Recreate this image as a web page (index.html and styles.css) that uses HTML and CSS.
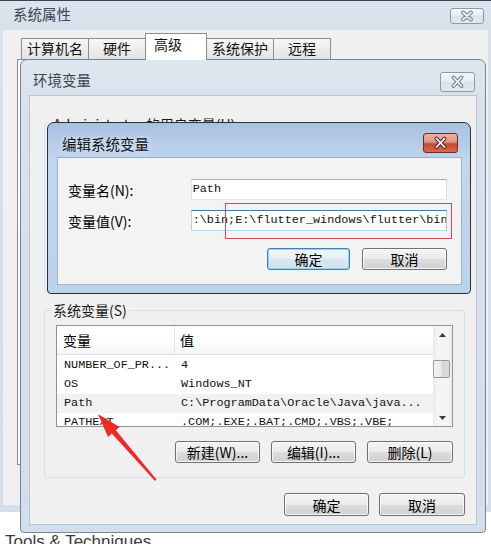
FILE: index.html
```html
<!DOCTYPE html>
<html lang="zh-CN">
<head>
  <meta charset="UTF-8" />
  <title>编辑系统变量</title>
  <link rel="stylesheet" href="styles.css">
</head>
<body>
<div class="desk">
  <div class="window sysWin">
    <div class="titleBar">
      <span class="winTitle">系统属性</span>
      <span class="closeBtn small">
        <svg viewBox="0 0 32 14"><path class="xOut" d="M12 3.5 20 10.5 M20 3.5 12 10.5" /><path class="xIn" d="M12 3.5 20 10.5 M20 3.5 12 10.5" /></svg>
      </span>
    </div>
    <div class="winBody">
      <div class="tabs">
        <span class="tab">计算机名</span>
        <span class="tab">硬件</span>
        <span class="tab active">高级</span>
        <span class="tab">系统保护</span>
        <span class="tab">远程</span>
      </div>
      <div class="tabPanel"></div>
    </div>
  </div>
  <p class="pageText">Tools &amp; Techniques</p>

  <div class="window envWin">
    <div class="titleBar">
      <span class="winTitle">环境变量</span>
      <span class="closeBtn">
        <svg viewBox="0 0 33 18"><path class="xOut" d="M12.5 4.5 20.5 13 M20.5 4.5 12.5 13" /><path class="xIn" d="M12.5 4.5 20.5 13 M20.5 4.5 12.5 13" /></svg>
      </span>
    </div>
    <div class="client">
      <fieldset class="group userGroup">
        <legend>Administrator 的用户变量(U)</legend>
      </fieldset>
      <fieldset class="group">
        <legend>系统变量(S)</legend>
        <div class="listView">
          <div class="listMain">
            <div class="listHead">
              <span class="colName">变量</span>
              <span class="colValue">值</span>
            </div>
            <div class="listRows">
              <div class="listRow"><span class="colName">NUMBER_OF_PR...</span><span class="colValue">4</span></div>
              <div class="listRow"><span class="colName">OS</span><span class="colValue">Windows_NT</span></div>
              <div class="listRow hot"><span class="colName">Path</span><span class="colValue">C:\ProgramData\Oracle\Java\java...</span></div>
              <div class="listRow"><span class="colName">PATHEXT</span><span class="colValue">.COM;.EXE;.BAT;.CMD;.VBS;.VBE;</span></div>
            </div>
          </div>
          <div class="vScroll">
            <span class="scrollArrow"><svg viewBox="0 0 7 4"><polygon points="0,4 3.5,0 7,4" /></svg></span>
            <div class="scrollTrack"><span class="scrollThumb"></span></div>
            <span class="scrollArrow"><svg viewBox="0 0 7 4"><polygon points="0,0 7,0 3.5,4" /></svg></span>
          </div>
        </div>
        <div class="btnRow groupBtns">
          <button class="btn">新建(W)...</button>
          <button class="btn">编辑(I)...</button>
          <button class="btn wide">删除(L)</button>
        </div>
      </fieldset>
      <div class="btnRow dialogBtns">
        <button class="btn">确定</button>
        <button class="btn wide">取消</button>
      </div>
    </div>
  </div>

  <div class="window editWin">
    <div class="titleBar">
      <span class="winTitle">编辑系统变量</span>
      <span class="closeBtn red">
        <svg viewBox="0 0 33 18"><path class="xOut" d="M12.5 4.5 20.5 13 M20.5 4.5 12.5 13" /><path class="xIn" d="M12.5 4.5 20.5 13 M20.5 4.5 12.5 13" /></svg>
      </span>
    </div>
    <div class="client editClient">
      <div class="fieldRow">
        <span class="fieldLabel">变量名(N):</span>
        <div class="textBox">Path</div>
      </div>
      <div class="fieldRow">
        <span class="fieldLabel">变量值(V):</span>
        <div class="textBox focused">:\bin;E:\flutter_windows\flutter\bin</div>
      </div>
      <div class="btnRow editBtns">
        <button class="btn default">确定</button>
        <button class="btn wide">取消</button>
      </div>
    </div>
  </div>

  <div class="markBox"></div>
  <svg class="markArrow" viewBox="0 0 491 544">
    <polygon points="98,414 119.5,427 115.8,430.2 156.5,479.5 155,481 111.8,433.6 108,437" />
  </svg>
</div>
</body>
</html>
```

FILE: styles.css
```css
* { margin: 0; padding: 0; box-sizing: border-box; }
html, body {
  background: #fff;
  font-family: "Noto Sans CJK SC", "Noto Sans", sans-serif;
  font-size: 14px;
  color: #000;
}
.desk {
  position: relative;
  width: 491px;
  height: 544px;
  overflow: hidden;
}

/* windows */
.window {
  display: flex;
  flex-direction: column;
}
.titleBar {
  display: flex;
  align-items: flex-start;
  justify-content: space-between;
  flex-shrink: 0;
}
.winTitle {
  font-size: 14.5px;
  line-height: 20px;
  color: #3c4450;
}
.closeBtn {
  display: flex;
  width: 35px;
  height: 20px;
  border: 1px solid #8d99a7;
  border-radius: 3px;
  background: linear-gradient(#f4f7fa, #e6ecf2 50%, #d9e1e9 50%, #e2e8ee);
}
.closeBtn svg { width: 100%; height: 100%; }
.xOut, .xIn { fill: none; stroke-linecap: round; }
.xOut { stroke: #717e8d; stroke-width: 3.8; }
.xIn { stroke: #f1f4f7; stroke-width: 1.8; }
.closeBtn.red {
  border-color: #70291f;
  background: linear-gradient(#ebb3a5, #df9282 45%, #c94a31 55%, #d4694c);
}
.red .xOut { stroke: #5a211a; }
.red .xIn { stroke: #fff; }

/* 系统属性 */
.sysWin {
  width: 491px;
  height: 512px;
  padding: 0 3px 7px;
  border-top: 1px solid #3d4249;
  background: linear-gradient(#dbe4ee, #d6e1ec 30px, #d4dfeb);
}
.sysWin .titleBar { height: 29px; padding: 0 4px 0 10px; }
.sysWin .winTitle { margin-top: 3px; }
.closeBtn.small { width: 34px; height: 16px; margin-top: 7px; }
.winBody {
  flex: 1;
  display: flex;
  flex-direction: column;
  padding: 3px 14px 40px;
  background: #f0f0f0;
}
.tabs {
  display: flex;
  align-items: flex-end;
  height: 26px;
  padding-left: 4px;
}
.tab {
  position: relative;
  height: 21px;
  min-width: 58px;
  padding: 0 5px;
  margin-left: -1px;
  border: 1px solid #898c95;
  border-bottom: 0;
  background: linear-gradient(#f8f8f8, #ececec 50%, #e3e3e3);
  text-align: center;
  line-height: 19px;
  color: #111;
}
.tab:first-child { margin-left: 0; }
.tab.active {
  z-index: 1;
  height: 27px;
  min-width: 62px;
  margin-bottom: -1px;
  padding: 1px 0 0 8px;
  background: #fff;
  text-align: left;
}
.tabPanel {
  flex: 1;
  border: 1px solid #898c95;
  background: #fbfbfb;
}
.pageText {
  margin-top: 20px;
  padding-left: 5px;
  font-family: "Liberation Sans", Arial, sans-serif;
  font-size: 17px;
  line-height: 20px;
  color: #3a3a3a;
}

/* 环境变量 */
.envWin {
  position: absolute;
  left: 20px;
  top: 59px;
  width: 466px;
  height: 474px;
  padding: 0 8px 7px;
  border: 1px solid #788493;
  border-radius: 7px 7px 4px 4px;
  background: linear-gradient(#dfe7f0, #d7e2ed 40px, #d2deeb);
}
.envWin .titleBar { height: 35px; padding: 0 2px 0 4px; }
.envWin .winTitle { margin-top: 10px; }
.envWin .closeBtn { margin-top: 12px; }
.client {
  flex: 1;
  display: flex;
  flex-direction: column;
  padding: 0 11px 0 14px;
  border: 1px solid #b8c5d3;
  background: #f0f0f0;
}
.group {
  min-width: 0;
  padding: 7px 11px 14px;
  border: 1px solid #d5dfe5;
  border-radius: 3px;
}
.group legend {
  margin-left: -5px;
  padding: 0 2px;
  line-height: 16px;
  color: #1a1a1a;
}
.userGroup {
  height: 176px;
  margin: 20px 0 10px;
}
.listView {
  display: flex;
  height: 102px;
  border: 1px solid #8e939b;
  background: #fff;
}
.listMain {
  flex: 1;
  overflow: hidden;
}
.listHead {
  display: flex;
  height: 29px;
  border-bottom: 1px solid #dcdfe3;
  background: linear-gradient(#fff, #fff 55%, #f4f5f7);
  line-height: 28px;
}
.listHead .colName { border-right: 1px solid #e3e5e8; }
.colName {
  flex-shrink: 0;
  width: 118px;
  padding-left: 6px;
}
.colValue {
  padding-left: 5px;
  white-space: nowrap;
}
.listRows { margin-top: 1px; }
.listRow {
  display: flex;
  height: 19px;
  font-family: "Liberation Mono", "Noto Sans CJK SC", monospace;
  font-size: 11.8px;
  line-height: 19px;
  color: #111;
}
.listRow .colName { padding-left: 7px; }
.listRow .colValue { padding-left: 6px; }
.listRow.hot { background: #f1f1f1; }
.vScroll {
  display: flex;
  flex-direction: column;
  width: 19px;
  background: linear-gradient(90deg, #e9e9e9, #f5f5f5 25%, #f5f5f5 75%, #ececec);
}
.scrollArrow {
  display: flex;
  align-items: center;
  justify-content: center;
  height: 17px;
}
.scrollArrow svg { width: 7px; height: 4px; fill: #3a3a3a; }
.scrollTrack {
  flex: 1;
  padding-top: 17px;
}
.scrollThumb {
  display: block;
  width: 17px;
  height: 18px;
  border: 1px solid #979797;
  border-radius: 2px;
  background: linear-gradient(90deg, #f4f4f4, #e8e8e8 50%, #d6d6d6 50%, #dcdcdc);
}

/* buttons */
.btnRow {
  display: flex;
  justify-content: flex-end;
}
.btn {
  width: 85px;
  height: 22px;
  border: 1px solid #707070;
  border-radius: 3px;
  background: linear-gradient(#f3f3f3, #ebebeb 50%, #dddddd 50%, #d1d1d1);
  box-shadow: inset 0 0 0 1px rgba(255, 255, 255, 0.75);
  font-family: inherit;
  font-size: 14px;
  line-height: 20px;
  color: #000;
}
.btn.wide { width: 86px; }
.groupBtns { gap: 11px; margin-top: 14px; }
.dialogBtns { gap: 10px; margin-top: 15px; }
.dialogBtns .btn { height: 23px; }
.btn.default {
  border-color: #3c7fb1;
  box-shadow: inset 0 0 0 1px #8fd6f3;
  background: linear-gradient(#f1f6f9, #e7eff5 50%, #d9e6ef 50%, #d2e1eb);
}

/* 编辑系统变量 */
.editWin {
  position: absolute;
  left: 47px;
  top: 122px;
  width: 424px;
  height: 172px;
  padding: 0 8px 8px 9px;
  border: 1px solid #2b3036;
  border-radius: 7px 7px 4px 4px;
  background: linear-gradient(#a9c2e0, #b6cde8 22px, #c2d6ed 38px, #bcd2ea);
}
.editWin .titleBar { height: 34px; padding: 0 4px 0 5px; }
.editWin .winTitle {
  margin-top: 11px;
  color: #111;
  text-shadow: 0 0 6px rgba(255, 255, 255, 0.9);
}
.editWin .closeBtn { margin-top: 10px; }
.editClient {
  padding: 21px 14px 0 10px;
  border-color: #9fb3c8;
  background: #f3f3f3;
}
.fieldRow {
  display: flex;
  align-items: center;
  height: 21px;
  margin-bottom: 10px;
}
.fieldLabel {
  width: 123px;
  line-height: 20px;
}
.textBox {
  width: 257px;
  height: 21px;
  padding-left: 1px;
  overflow: hidden;
  border: 1px solid;
  border-color: #abadb3 #dbdfe6 #e3e9ef #e2e3ea;
  background: #fff;
  font-family: "Liberation Mono", monospace;
  font-size: 11.8px;
  line-height: 19px;
  white-space: nowrap;
  color: #111;
}
.textBox.focused { border-color: #3d7bad #a4c9e3 #b7d9ed #b5cfe7; }
.editBtns { gap: 12px; margin-top: 7px; }
.editBtns .btn { width: 83px; }
.editBtns .btn.wide { width: 85px; }

/* annotations */
.markBox {
  position: absolute;
  left: 225px;
  top: 203px;
  width: 227px;
  height: 36px;
  border: 1px solid #e0474c;
}
.markArrow {
  position: absolute;
  left: 0;
  top: 0;
  width: 491px;
  height: 544px;
  fill: #ee2a27;
  pointer-events: none;
}
```
